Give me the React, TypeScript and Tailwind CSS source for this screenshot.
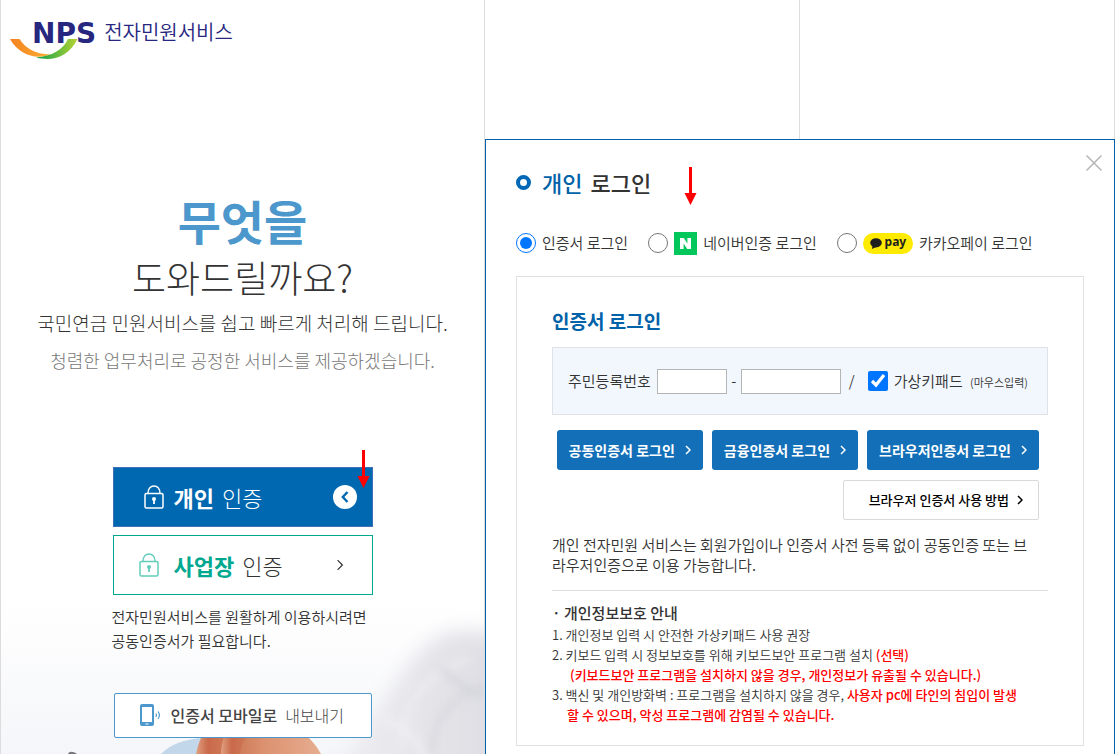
import type { ReactNode } from "react";

function Chevron({ className, strokeWidth = 1.5 }: { className: string; strokeWidth?: number }) {
  return (
    <svg viewBox="0 0 6 10" className={className} fill="none" stroke="currentColor" strokeWidth={strokeWidth} aria-hidden="true">
      <path d="M1 1l4 4-4 4" />
    </svg>
  );
}

function LockIcon({ className }: { className: string }) {
  return (
    <svg viewBox="0 0 20 24" className={className} fill="none" stroke="currentColor" strokeWidth="1.5" aria-hidden="true">
      <rect x="1" y="8.500" width="18" height="14.500" rx="1.500" />
      <path d="M4 8.500C4 4 6.500 1 10 1s6 3 6 7.500" />
      <circle cx="10" cy="14" r="2" fill="currentColor" stroke="none" />
      <path d="M10 14v5" strokeWidth="1.800" />
    </svg>
  );
}

function RedArrow({ className }: { className: string }) {
  return (
    <svg viewBox="0 0 13 38" className={className} fill="#ff0000" aria-hidden="true">
      <path d="M5 0h3v26h4.500l-6 12-6-12H5z" />
    </svg>
  );
}

function Logo() {
  return (
    <a href="#home" className="relative flex h-10 w-fit items-start pl-[22px] text-[#27277f]">
      <svg viewBox="0 0 70 22" className="absolute top-[19px] left-0 h-[22px] w-[70px]" aria-hidden="true">
        <defs>
          <linearGradient id="swooshWarm" x1="0" x2="1">
            <stop offset="0" stopColor="#f58220" />
            <stop offset="1" stopColor="#fbb034" />
          </linearGradient>
          <linearGradient id="swooshGreen" x1="0" x2="1">
            <stop offset="0" stopColor="#0fa14a" />
            <stop offset="1" stopColor="#b5d334" />
          </linearGradient>
        </defs>
        <path d="M0 1h9.500c6 9 15 15 31 15.500C26 22 9 17 0 1z" fill="url(#swooshWarm)" />
        <path d="M26 19.500C42 18 53 12 58 1h9.500C59 18 44 24 26 19.500z" fill="url(#swooshGreen)" />
      </svg>
      <span className="relative font-['DejaVu_Sans',sans-serif] text-[28px] leading-[29px] font-bold">NPS</span>
      <span className="ml-2 text-[20px] leading-[26px]">전자민원서비스</span>
    </a>
  );
}

function DeskPhoto() {
  return (
    <svg
      viewBox="0 0 483 154"
      preserveAspectRatio="xMaxYMax slice"
      className="absolute inset-x-0 bottom-0 h-[154px] w-full"
      aria-hidden="true"
    >
      <defs>
        <linearGradient id="desk" x1="0" y1="0" x2="0" y2="1">
          <stop offset="0" stopColor="#ffffff" />
          <stop offset="1" stopColor="#f5f6f9" />
        </linearGradient>
        <linearGradient id="sleeve" x1="0" y1="0" x2="1" y2="0">
          <stop offset="0" stopColor="#f0f0f4" />
          <stop offset="0.500" stopColor="#e4e4e9" />
          <stop offset="1" stopColor="#dcdce2" />
        </linearGradient>
        <linearGradient id="finger" x1="0" x2="1">
          <stop offset="0" stopColor="#e0a080" />
          <stop offset="0.400" stopColor="#c9694a" />
          <stop offset="1" stopColor="#cf7a58" />
        </linearGradient>
        <linearGradient id="palm" x1="0" x2="1">
          <stop offset="0" stopColor="#cf7c5a" />
          <stop offset="0.300" stopColor="#dc9270" />
          <stop offset="1" stopColor="#e6ad90" />
        </linearGradient>
        <filter id="soft" x="-30%" y="-30%" width="160%" height="160%">
          <feGaussianBlur stdDeviation="10" />
        </filter>
        <filter id="fold" x="-20%" y="-20%" width="140%" height="140%">
          <feGaussianBlur stdDeviation="4" />
        </filter>
      </defs>
      <rect width="483" height="154" fill="url(#desk)" />
      <path d="M320 190C350 150 372 118 392 88c16-24 36-52 62-56 20-2 40 2 70 8v150z" fill="url(#sleeve)" filter="url(#soft)" />
      <g fill="none" strokeWidth="6" filter="url(#fold)" opacity="0.600">
        <path d="M400 150c0-40 22-78 70-92" stroke="#f1f1f5" />
        <path d="M430 155c2-35 20-62 60-70" stroke="#d2d2d9" />
        <path d="M440 68c12 12 24 22 43 28" stroke="#cdcdd5" />
        <path d="M384 120c22 8 34 20 40 40" stroke="#f7f7f9" />
      </g>
      <path d="M160 154c10-10 22-14 40-16v16z" fill="#c3d7ea" />
      <path d="M195 154c2-9 4-15 8-22h22v22z" fill="url(#finger)" />
      <path d="M220 154c0-9 2-15 5-22h22v22z" fill="url(#finger)" />
      <path d="M239 154c1-9 5-16 10-22h52c8 6 14 13 19 22z" fill="url(#palm)" />
      <path d="M67 154c1-3 5-3 9 0z" fill="#77777b" />
    </svg>
  );
}

function LoginOption({ id, checked, icon, children }: { id: string; checked?: boolean; icon?: ReactNode; children: ReactNode }) {
  return (
    <div className="flex items-center gap-1.5">
      <input id={id} type="radio" name="method" defaultChecked={checked} className="size-5 accent-[#0075ff]" />
      <label htmlFor={id} className="flex items-center gap-1.5 text-[15px] leading-6">
        {icon}
        {children}
      </label>
    </div>
  );
}

function CertButton({ children }: { children: ReactNode }) {
  return (
    <button type="button" className="flex h-10 items-center gap-2.5 rounded-[3px] bg-[#126fb8] px-3 text-[14px] font-bold whitespace-nowrap text-white">
      {children}
      <Chevron className="h-2.5 w-1.5" />
    </button>
  );
}

function IntroPanel() {
  return (
    <section className="relative overflow-hidden border-x border-[#dcdcdc]">
      <DeskPhoto />
      <div className="relative flex flex-col items-center">
        <header className="h-48 w-full pt-[19px] pl-[9px]">
          <Logo />
        </header>
        <h1 className="text-center">
          <span className="block text-[47px] leading-[56px] font-bold text-[#4c97cc]">무엇을</span>
          <span className="block text-[37px] leading-[58px] font-light">도와드릴까요?</span>
        </h1>
        <p className="text-[19px] leading-[34px] font-light">국민연금 민원서비스를 쉽고 빠르게 처리해 드립니다.</p>
        <p className="text-[18px] leading-10 font-light text-[#777]">청렴한 업무처리로 공정한 서비스를 제공하겠습니다.</p>

        <div className="mt-[87px] flex w-[260px] flex-col gap-2">
          <button type="button" className="relative flex h-[60px] items-center border border-[#3f6fb8] bg-[#0068b0] pr-[15px] pl-[30px] text-[22px] text-white">
            <LockIcon className="mr-2.5 h-6 w-5" />
            <span className="flex flex-1 gap-2">
              <strong>개인</strong> <span className="font-light">인증</span>
            </span>
            <span className="flex size-6 items-center justify-center rounded-full bg-white text-[#0068b0]">
              <svg viewBox="0 0 8 12" className="h-3 w-2" fill="none" stroke="currentColor" strokeWidth="2.400" aria-hidden="true">
                <path d="M6.500 1L1.800 6l4.700 5" />
              </svg>
            </span>
            <RedArrow className="absolute -top-[18px] right-0.5 h-[38px] w-[13px]" />
          </button>
          <button type="button" className="flex h-[60px] items-center border border-[#00a88f] bg-white pr-7 pl-[25px] text-[22px]">
            <LockIcon className="mr-[15px] h-6 w-5 text-[#63cdbb]" />
            <span className="flex flex-1 gap-2">
              <strong className="text-[#00a88f]">사업장</strong> <span className="font-light">인증</span>
            </span>
            <Chevron className="h-3 w-2" strokeWidth={1} />
          </button>
        </div>
        <p className="mt-2.5 w-[262px] text-[15px] leading-6 whitespace-nowrap">
          전자민원서비스를 원활하게 이용하시려면
          <br />
          공동인증서가 필요합니다.
        </p>
        <button type="button" className="mt-10 flex h-[45px] w-[258px] items-center rounded-[2px] border border-[#4c97cc] bg-white pb-0.5 pl-[25px] text-[16px] text-[#444]">
          <svg viewBox="0 0 21 22" className="mr-2.5 h-[22px] w-[21px] text-[#4c97cc]" aria-hidden="true">
            <path fillRule="evenodd" fill="currentColor" d="M2 0h10a2 2 0 0 1 2 2v18a2 2 0 0 1-2 2H2a2 2 0 0 1-2-2V2a2 2 0 0 1 2-2zm0 3v15h10V3zm3.500 16.500v1h3v-1z" />
            <path d="M15.800 9.500q1.200 1.500 0 3.500M18 7.500q2.800 3.500 0 7.500" fill="none" stroke="currentColor" strokeWidth="1.200" />
          </svg>
          <span className="flex gap-2">
            <span className="font-medium">인증서 모바일로</span> <span className="font-light">내보내기</span>
          </span>
        </button>
      </div>
    </section>
  );
}

function LoginPanel() {
  return (
    <section className="relative col-span-2 border border-b-0 border-[#0062a8] bg-white px-[30px] pt-[26px]">
      <button type="button" aria-label="닫기" className="absolute top-[15px] right-3 text-[#b5b5b5]">
        <svg viewBox="0 0 16 16" className="size-4" fill="none" stroke="currentColor" strokeWidth="1.500" aria-hidden="true">
          <path d="M0.500 0.500l15 15M15.500 0.500l-15 15" />
        </svg>
      </button>
      <RedArrow className="absolute top-[27px] left-[198px] h-[38px] w-[13px]" />
      <h2 className="flex items-center gap-[11px] text-[22px] leading-8 font-medium">
        <span className="size-[15px] rounded-full border-4 border-[#0068b7]" />
        <span className="flex gap-2">
          <span className="text-[#0062a8]">개인</span> <span>로그인</span>
        </span>
      </h2>

      <div className="mt-[33px] flex items-center gap-5 whitespace-nowrap">
        <LoginOption id="cert" checked>
          인증서 로그인
        </LoginOption>
        <LoginOption
          id="naver"
          icon={
            <svg viewBox="0 0 23 23" className="size-[23px]" aria-hidden="true">
              <rect width="23" height="23" fill="#03c75a" />
              <path d="M6 6h3.800l3.600 5.400V6H17v11h-3.800l-3.600-5.400V17H6z" fill="#fff" />
            </svg>
          }
        >
          네이버인증 로그인
        </LoginOption>
        <LoginOption
          id="kakao"
          icon={
            <span className="flex h-[21px] w-[50px] items-center justify-center gap-[3px] rounded-full bg-[#ffeb00] text-[#1e1e1e]">
              <svg viewBox="0 0 12 11" className="h-[11px] w-3" fill="currentColor" aria-hidden="true">
                <ellipse cx="6" cy="4.800" rx="5.800" ry="4.600" />
                <path d="M2.500 7.500L2 11l4-2z" />
              </svg>
              <span className="pb-0.5 font-['Noto_Sans',sans-serif] text-[12px] leading-4 font-bold">pay</span>
            </span>
          }
        >
          카카오페이 로그인
        </LoginOption>
      </div>

      <div className="mt-[21px] border border-[#e1e1e1] px-[35px] pt-[30px] pb-5">
        <h3 className="text-[19px] leading-7 font-bold text-[#0062a8]">인증서 로그인</h3>

        <div className="mt-3 flex h-[68px] items-center border border-[#dfe3e8] bg-[#f2f7fe] pl-[15px] text-[15px] whitespace-nowrap">
          <label htmlFor="rrn-front">주민등록번호</label>
          <input id="rrn-front" type="text" className="ml-1.5 h-[25px] w-[70px] border border-[#b5b5b5] bg-white px-1" />
          <span className="w-3.5 text-center">-</span>
          <input type="text" aria-label="주민등록번호 뒷자리" className="h-[25px] w-[100px] border border-[#b5b5b5] bg-white px-1" />
          <span className="ml-2">/</span>
          <input id="keypad" type="checkbox" defaultChecked className="ml-[13px] size-5 accent-[#0075ff]" />
          <label htmlFor="keypad" className="ml-1.5">
            가상키패드 <span className="ml-1 text-[11px]">(마우스입력)</span>
          </label>
        </div>

        <div className="mt-[15px] flex flex-wrap justify-end gap-[9px] pr-[9px]">
          <CertButton>공동인증서 로그인</CertButton>
          <CertButton>금융인증서 로그인</CertButton>
          <CertButton>브라우저인증서 로그인</CertButton>
        </div>
        <div className="mt-2.5 flex justify-end pr-[9px]">
          <button type="button" className="flex h-10 items-center gap-2 rounded-[2px] border border-[#d9d9d9] bg-white pr-[15px] pl-[25px] text-[13px] font-medium text-black">
            브라우저 인증서 사용 방법
            <Chevron className="h-2.5 w-1.5" />
          </button>
        </div>

        <p className="mt-[15px] border-b border-[#dcdcdc] pb-[15px] text-[15px] leading-5">
          개인 전자민원 서비스는 회원가입이나 인증서 사전 등록 없이 공동인증 또는 브
          <br />
          라우저인증으로 이용 가능합니다.
        </p>

        <h4 className="mt-2.5 text-[15px] leading-6 font-medium">· 개인정보보호 안내</h4>
        <ul className="text-[13px] leading-5">
          <li>1. 개인정보 입력 시 안전한 가상키패드 사용 권장</li>
          <li>
            2. 키보드 입력 시 정보보호를 위해 키보드보안 프로그램 설치 <span className="font-medium text-[#f00]">(선택)</span>
            <span className="block pl-[18px] font-medium text-[#f00]">(키보드보안 프로그램을 설치하지 않을 경우, 개인정보가 유출될 수 있습니다.)</span>
          </li>
          <li>
            3. 백신 및 개인방화벽 : 프로그램을 설치하지 않을 경우, <span className="font-medium text-[#f00]">사용자 pc에 타인의 침입이 발생</span>
            <span className="block pl-[15px] font-medium text-[#f00]">할 수 있으며, 악성 프로그램에 감염될 수 있습니다.</span>
          </li>
        </ul>
      </div>
    </section>
  );
}

export default function App() {
  return (
    <main className="mr-px grid min-h-screen grid-cols-[485fr_630fr] bg-white font-['Noto_Sans_CJK_KR',sans-serif] font-[350] text-[#333]">
      <IntroPanel />
      <div className="grid grid-cols-2 grid-rows-[139px_1fr]">
        <div className="border-r border-[#dcdcdc]" />
        <div className="border-r border-[#dcdcdc]" />
        <LoginPanel />
      </div>
    </main>
  );
}
